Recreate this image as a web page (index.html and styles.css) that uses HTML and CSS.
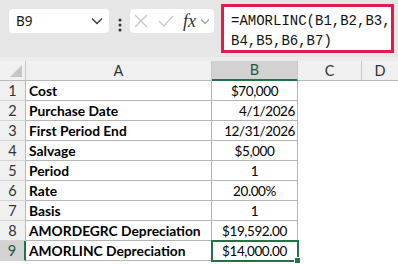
FILE: index.html
```html
<!DOCTYPE html>
<html lang="en">
<head>
    <meta charset="UTF-8">
    <title>AMORLINC</title>
    <link rel="stylesheet" href="styles.css">
</head>
<body>
    <div class="toolbar">
        <div class="namebox">
            <span>B9</span>
            <svg class="chev" width="12" height="8" viewBox="0 0 12 8"><path d="M1 1.5 L6 6.5 L11 1.5" fill="none" stroke="#333" stroke-width="1.3"/></svg>
        </div>
        <svg class="grip" width="4" height="14" viewBox="0 0 4 14"><circle cx="2" cy="2" r="1.5" fill="#333"/><circle cx="2" cy="7" r="1.5" fill="#333"/><circle cx="2" cy="12" r="1.5" fill="#333"/></svg>
        <div class="fxbox">
            <svg width="14" height="14" viewBox="0 0 14 14"><path d="M1 1 L13 13 M13 1 L1 13" stroke="#c4c4c4" stroke-width="1.2"/></svg>
            <svg width="16" height="14" viewBox="0 0 16 14"><path d="M1 7 L6 12 L15 2" fill="none" stroke="#c4c4c4" stroke-width="1.2"/></svg>
            <span class="fx">fx</span>
            <svg class="chev" width="10" height="7" viewBox="0 0 10 7"><path d="M1 1.5 L5 5.5 L9 1.5" fill="none" stroke="#999" stroke-width="1.1"/></svg>
        </div>
        <div class="formula">=AMORLINC(B1,B2,B3,<br>B4,B5,B6,B7)</div>
    </div>

    <div class="sheet">
        <div class="hd corner"><span class="tri"></span></div>
        <div class="hd">A</div>
        <div class="hd sel-col">B</div>
        <div class="hd">C</div>
        <div class="hd last">D</div>

        <div class="rn">1</div><div class="c lbl">Cost</div><div class="c mid">$70,000</div><div class="e"></div><div class="e"></div>
        <div class="rn">2</div><div class="c lbl">Purchase Date</div><div class="c num">4/1/2026</div><div class="e"></div><div class="e"></div>
        <div class="rn">3</div><div class="c lbl">First Period End</div><div class="c num">12/31/2026</div><div class="e"></div><div class="e"></div>
        <div class="rn">4</div><div class="c lbl">Salvage</div><div class="c mid">$5,000</div><div class="e"></div><div class="e"></div>
        <div class="rn">5</div><div class="c lbl">Period</div><div class="c mid">1</div><div class="e"></div><div class="e"></div>
        <div class="rn">6</div><div class="c lbl">Rate</div><div class="c mid">20.00%</div><div class="e"></div><div class="e"></div>
        <div class="rn">7</div><div class="c lbl">Basis</div><div class="c mid">1</div><div class="e"></div><div class="e"></div>
        <div class="rn">8</div><div class="c lbl">AMORDEGRC Depreciation</div><div class="c mid">$19,592.00</div><div class="e"></div><div class="e"></div>
        <div class="rn sel-row">9</div><div class="c lbl">AMORLINC Depreciation</div><div class="c mid active">$14,000.00<span class="handle"></span></div><div class="e"></div><div class="e"></div>
    </div>
</body>
</html>
```

FILE: styles.css
```css
body {
    margin: 0;
    width: 398px;
    height: 264px;
    overflow: hidden;
    background: #fff;
    font-family: Lato, "Liberation Sans", sans-serif;
}

.toolbar {
    display: flex;
    align-items: flex-start;
    height: 61px;
    padding: 4px 0 0 9px;
    box-sizing: border-box;
    background: #e6e6e6;
    border-bottom: 4px solid #ececec;
}

.namebox {
    display: flex;
    align-items: center;
    justify-content: space-between;
    width: 100px;
    height: 24px;
    margin-top: 5px;
    padding: 0 6px 0 7px;
    box-sizing: border-box;
    background: #fff;
    border-radius: 4px;
    font-family: "Noto Sans", sans-serif;
    font-size: 13.5px;
    color: #111;
}

.grip {
    margin: 14px 8px 0 9px;
}

.fxbox {
    display: flex;
    align-items: center;
    width: 84px;
    height: 24px;
    margin-top: 5px;
    padding: 0 3px 0 4px;
    box-sizing: border-box;
    background: #fff;
    border-radius: 4px;
}

.fxbox svg:nth-child(2) {
    margin-left: 10px;
}

.fx {
    margin-left: 9px;
    font-family: "Liberation Serif", serif;
    font-style: italic;
    font-size: 18px;
    color: #333;
}

.fxbox .chev {
    margin-left: 4px;
}

.formula {
    width: 173px;
    height: 49px;
    margin-left: 7px;
    padding: 4px 0 0 7px;
    box-sizing: border-box;
    background: #fff;
    border: 3px solid #e5194b;
    font-family: "Liberation Mono", monospace;
    font-size: 14px;
    line-height: 20px;
    color: #111;
}

.sheet {
    display: grid;
    grid-template-columns: 26px 186px 86px 64px 1fr;
    grid-auto-rows: 20px;
    font-size: 14px;
}

.hd {
    background: #f0f0f0;
    border-right: 1px solid #c8c8c8;
    border-bottom: 1px solid #b8b8b8;
    text-align: center;
    line-height: 19px;
    color: #333;
    font-size: 14.5px;
}

.hd.last {
    border-right: none;
}

.corner {
    position: relative;
}

.tri {
    position: absolute;
    right: 3px;
    bottom: 3px;
    width: 0;
    height: 0;
    border-left: 12px solid transparent;
    border-bottom: 12px solid #c6c6c6;
}

.sel-col {
    background: #d2d2d2;
    border-bottom: 2px solid #217346;
    line-height: 18px;
    color: #1e5c38;
}

.rn {
    background: #f0f0f0;
    border-right: 1px solid #b8b8b8;
    border-bottom: 1px solid #d4d4d4;
    text-align: center;
    line-height: 20px;
    color: #333;
    font-size: 14.5px;
}

.sel-row {
    background: #d2d2d2;
    border-right: 2px solid #217346;
    color: #1e5c38;
}

.c {
    position: relative;
    border-right: 1px solid #b4b4b4;
    border-bottom: 1px solid #b4b4b4;
    padding: 0 3px;
    line-height: 20px;
    white-space: nowrap;
    color: #000;
    font-size: 13.5px;
    letter-spacing: -0.4px;
}

.lbl {
    font-weight: bold;
    font-size: 13.8px;
    letter-spacing: 0;
}

.num {
    text-align: right;
    padding-right: 2px;
}

.mid {
    text-align: center;
}

.active {
    outline: 2px solid #217346;
    outline-offset: -1px;
}

.handle {
    position: absolute;
    right: -4px;
    bottom: -4px;
    width: 5px;
    height: 5px;
    background: #217346;
    border: 1px solid #fff;
}
```
